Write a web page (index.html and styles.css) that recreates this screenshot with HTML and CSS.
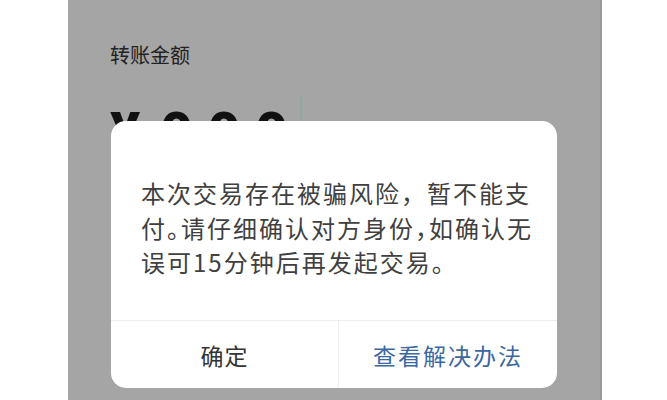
FILE: index.html
```html
<!DOCTYPE html>
<html lang="zh-CN">
<head>
    <meta charset="UTF-8">
    <meta name="viewport" content="width=device-width, initial-scale=1.0">
    <title>转账</title>
    <link rel="stylesheet" href="styles.css">
</head>
<body>

    <div class="screen">
        <div class="label">转账金额</div>
        <div class="amount">
            <span class="yen">¥</span><span class="digits">000</span><span class="cursor"></span>
        </div>

        <!-- risk warning dialog over the transfer form -->
        <div class="dialog">
            <p class="message">本次交易存在被骗风险，暂不能支<br>付<span class="p">。</span>请仔细确认对方身份<span class="p">，</span>如确认无<br>误可15分钟后再发起交易。</p>
            <div class="actions">
                <button class="btn">确定</button>
                <button class="btn btn-link">查看解决办法</button>
            </div>
        </div>
    </div>

</body>
</html>
```

FILE: styles.css
```css
body {
    margin: 0;
    background: #fff;
    font-family: "Noto Sans CJK SC", "Noto Sans", sans-serif;
    height: 400px;
    overflow: hidden;
}
.screen {
    position: relative;
    margin-left: 68px;
    width: 534px;
    height: 400px;
    background: #a5a5a5;
    box-shadow: inset -2px 0 0 #999;
    padding: 41px 0 0 42px;
    box-sizing: border-box;
}
.label {
    font-size: 20px;
    line-height: 28px;
    color: #222;
}
.amount {
    display: flex;
    align-items: flex-start;
    margin-top: 36px;
    font-family: Roboto, "Liberation Sans", sans-serif;
    font-weight: 900;
    font-size: 56px;
    line-height: 1;
    color: #111;
}
.yen {
    margin-right: 20px;
}
.digits {
    letter-spacing: 15px;
}
.cursor {
    width: 2px;
    height: 60px;
    margin-top: -9px;
    margin-left: -3px;
    background: #8ea89e;
}
.dialog {
    position: absolute;
    left: 43px;
    top: 121px;
    width: 446px;
    height: 267px;
    background: #fff;
    border-radius: 15px;
    display: flex;
    flex-direction: column;
    overflow: hidden;
}
.message {
    flex: 1;
    margin: 0;
    padding: 55px 0 0 30px;
    font-size: 24px;
    line-height: 34.5px;
    letter-spacing: 2px;
    white-space: nowrap;
    color: #404040;
}
.p {
    font-feature-settings: "halt";
}
.actions {
    display: grid;
    grid-template-columns: 227px 1fr;
    height: 67px;
    border-top: 1px solid #ececec;
}
.btn {
    border: none;
    background: none;
    font-family: inherit;
    font-size: 23px;
    letter-spacing: 1px;
    color: #333;
    padding: 0;
}
.btn-link {
    color: #3b67a2;
    letter-spacing: 2px;
    border-left: 1px solid #f0f0f0;
}
```
